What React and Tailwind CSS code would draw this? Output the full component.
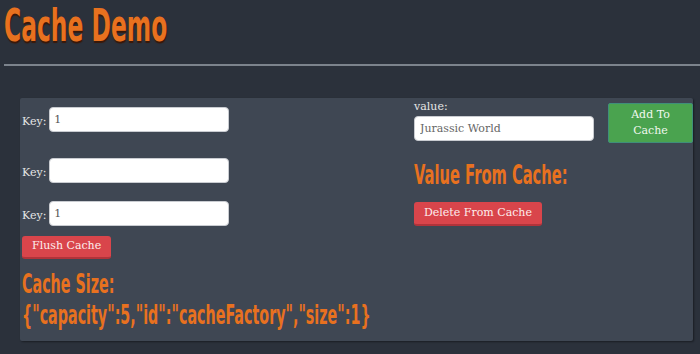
import React from 'react';

const serif = { fontFamily: '"DejaVu Serif", "Liberation Serif", serif' };
const narrow = { fontFamily: '"DejaVu Sans", "Liberation Sans", sans-serif' };

function KeyRow({ value }) {
  return (
    <div className="flex items-end">
      <span className="text-[11px] leading-[14px] pb-[3px] text-[#e6e6e6] mr-[3px]" style={serif}>Key:</span>
      <input
        defaultValue={value}
        className="w-[180px] h-[25px] bg-white rounded-[4px] border border-[#c9ccd1] px-[4px] text-[11px] text-[#555] outline-none"
        style={serif}
      />
    </div>
  );
}

export default function App() {
  return (
    <div className="w-[700px] h-[354px] bg-[#2b313b] overflow-hidden">
      {/* HEADER */}
      <div className="pl-[4px] pt-[2px]">
        <h1
          className="text-[45px] leading-[48px] font-bold text-[#e8711f] whitespace-nowrap origin-left scale-x-[0.52] [text-shadow:1px_2px_1px_rgba(60,20,0,0.85)]"
          style={narrow}
        >
          Cache Demo
        </h1>
        <div className="mt-[14px] h-[2px] bg-[#7c838c]" />
      </div>

      {/* PANEL */}
      <div className="ml-[20px] mt-[32px] w-[673px] h-[243px] bg-[#3f4753] rounded-[2px] shadow-[1px_1px_2px_rgba(0,0,0,0.4)] flex">
        {/* LEFT */}
        <div className="w-[394px] pl-[2px] pt-[9px] flex flex-col">
          <KeyRow value="1" />
          <div className="mt-[26px]"><KeyRow value="" /></div>
          <div className="mt-[18px]"><KeyRow value="1" /></div>
          <button
            className="mt-[10px] self-start h-[23px] px-[10px] bg-[#d9454b] border-b-2 border-[#b1333a] rounded-[3px] text-[#fdeeee] text-[11px]"
            style={serif}
          >
            Flush Cache
          </button>
          <div
            className="mt-[10px] text-[#e8711f] font-bold text-[26px] leading-[31px] whitespace-nowrap origin-left scale-x-[0.55]"
            style={narrow}
          >
            <div>Cache Size:</div>
            <div>{'{"capacity":5,"id":"cacheFactory","size":1}'}</div>
          </div>
        </div>

        {/* RIGHT */}
        <div className="flex-1 pt-[2px]">
          <div className="flex">
            <div className="w-[194px]">
              <div className="text-[11px] leading-[14px] text-[#e6e6e6]" style={serif}>value:</div>
              <input
                defaultValue="Jurassic World"
                className="mt-[2px] w-[180px] h-[25px] bg-white rounded-[4px] border border-[#c9ccd1] px-[5px] text-[11px] text-[#666] outline-none"
                style={serif}
              />
            </div>
            <button
              className="mt-[3px] w-[85px] h-[40px] bg-[#4aa34f] border border-[#3f8f7a] rounded-[2px] text-[#f0f8ee] text-[11px] leading-[16px]"
              style={serif}
            >
              Add To<br />Cache
            </button>
          </div>
          <div
            className="mt-[17px] text-[#e8711f] font-bold text-[26px] leading-[31px] whitespace-nowrap origin-left scale-x-[0.565]"
            style={narrow}
          >
            Value From Cache:
          </div>
          <button
            className="mt-[11px] h-[24px] px-[10px] bg-[#d9454b] border-b-2 border-[#b1333a] rounded-[3px] text-[#fdeeee] text-[11px]"
            style={serif}
          >
            Delete From Cache
          </button>
        </div>
      </div>
    </div>
  );
}
